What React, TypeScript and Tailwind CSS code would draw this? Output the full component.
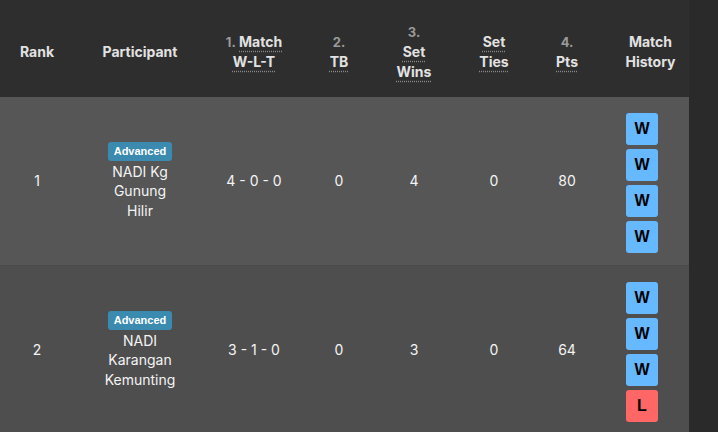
import React from 'react';

type Row = {
  rank: number;
  name: string;
  wlt: string;
  tb: number;
  setWins: number;
  setTies: number;
  pts: number;
  history: ('W' | 'L')[];
  bg: string;
};

const rows: Row[] = [
  { rank: 1, name: 'NADI Kg Gunung Hilir', wlt: '4 - 0 - 0', tb: 0, setWins: 4, setTies: 0, pts: 80, history: ['W', 'W', 'W', 'W'], bg: 'bg-[#565656]' },
  { rank: 2, name: 'NADI Karangan Kemunting', wlt: '3 - 1 - 0', tb: 0, setWins: 3, setTies: 0, pts: 64, history: ['W', 'W', 'W', 'L'], bg: 'bg-[#4e4e4e] border-t border-[#4a4a4a]' },
];

const Ul = ({ children }: { children: React.ReactNode }) => (
  <span className="underline decoration-dotted decoration-[#8a8a8a] underline-offset-[4px]">{children}</span>
);

const Num = ({ children }: { children: React.ReactNode }) => (
  <span className="text-[#9a9a9a] text-[13px]">{children}</span>
);

export default function App() {
  return (
    <div className="w-[718px] h-[432px] overflow-hidden bg-[#2a2a2a] font-['Inter',sans-serif]">
      <table className="w-[689px] table-fixed border-collapse">
        <colgroup>
          <col className="w-[74px]" />
          <col className="w-[132px]" />
          <col className="w-[96px]" />
          <col className="w-[74px]" />
          <col className="w-[76px]" />
          <col className="w-[84px]" />
          <col className="w-[62px]" />
          <col className="w-[91px]" />
        </colgroup>
        <thead>
          <tr className="bg-[#2e2e2e] h-[97px] text-[14px] font-semibold text-[#e2e2e2] leading-[20px] text-center">
            <th className="pt-[6px]">Rank</th>
            <th className="pt-[6px]">Participant</th>
            <th className="pt-[6px]">
              <div><Num>1.</Num> <Ul>Match</Ul></div>
              <div><Ul>W-L-T</Ul></div>
            </th>
            <th className="pt-[6px]">
              <div><Num>2.</Num></div>
              <div><Ul>TB</Ul></div>
            </th>
            <th className="pt-[6px]">
              <div><Num>3.</Num></div>
              <div><Ul>Set</Ul></div>
              <div><Ul>Wins</Ul></div>
            </th>
            <th className="pt-[6px]">
              <div><Ul>Set</Ul></div>
              <div><Ul>Ties</Ul></div>
            </th>
            <th className="pt-[6px]">
              <div><Num>4.</Num></div>
              <div><Ul>Pts</Ul></div>
            </th>
            <th className="pt-[6px] pl-[14px]">
              <div>Match</div>
              <div>History</div>
            </th>
          </tr>
        </thead>
        <tbody>
          {rows.map((r) => (
            <tr key={r.rank} className={`${r.bg} text-[14px] text-[#f4f4f4] text-center leading-[19.5px]`}>
              <td>{r.rank}</td>
              <td>
                <div className="mx-auto w-[76px] flex flex-col items-center">
                  <span className="mb-[1px] rounded-[3px] bg-[#3b8ab0] px-[6px] h-[19px] leading-[19px] text-[11px] font-bold text-white font-['Liberation_Sans',sans-serif]">
                    Advanced
                  </span>
                  <span>{r.name}</span>
                </div>
              </td>
              <td>{r.wlt}</td>
              <td>{r.tb}</td>
              <td>{r.setWins}</td>
              <td>{r.setTies}</td>
              <td>{r.pts}</td>
              <td className="py-3 pr-[3px]">
                <div className="flex flex-col items-center">
                  {r.history.map((h, i) => (
                    <div
                      key={i}
                      className={`mt-1 w-[32px] h-[32px] rounded-[3px] flex items-center justify-center text-[16px] font-bold text-black font-['Liberation_Sans',sans-serif] ${h === 'W' ? 'bg-[#66b9ff]' : 'bg-[#ff6666]'}`}
                    >
                      {h}
                    </div>
                  ))}
                </div>
              </td>
            </tr>
          ))}
        </tbody>
      </table>
    </div>
  );
}
